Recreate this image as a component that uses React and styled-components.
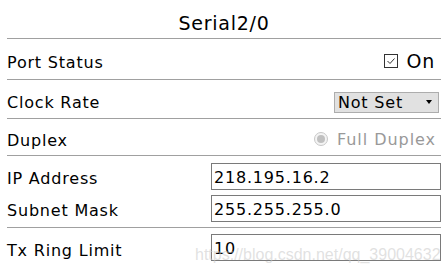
import React from "react";
import styled, { createGlobalStyle } from "styled-components";

const Global = createGlobalStyle`
  html, body { margin: 0; padding: 0; background: #fff; }
  body { font-family: "DejaVu Sans", Verdana, sans-serif; color: #000; }
`;

const Page = styled.div`
  position: relative;
  width: 448px;
  height: 273px;
  padding: 0 7px;
  box-sizing: border-box;
  overflow: hidden;
`;

const Title = styled.div`
  height: 39px;
  border-bottom: 1px solid #a0a0a0;
  display: flex;
  align-items: center;
  justify-content: center;
  font-size: 19px;
  letter-spacing: 0.75px;
  padding-top: 8px;
  box-sizing: border-box;
`;

const Row = styled.div`
  height: ${(p) => p.$h}px;
  display: flex;
  align-items: center;
  justify-content: space-between;
  border-bottom: 1px solid #a0a0a0;
  padding-top: 4px;
  box-sizing: border-box;
`;

const Group = styled.div`
  border-bottom: 1px solid #a0a0a0;
  padding: 7px 0 5px;
  display: flex;
  flex-direction: column;
  gap: 5px;
`;

const FieldRow = styled.div`
  height: 27px;
  display: flex;
  align-items: center;
  justify-content: space-between;
`;

const Label = styled.span`
  font-size: 16px;
  letter-spacing: 0.8px;
  color: #000;
  padding-top: 3px;
`;

const Check = styled.label`
  display: flex;
  align-items: center;
  gap: 8px;
  margin-right: 6px;
  font-size: 19px;
  letter-spacing: 0.8px;
`;

const Box = styled.span`
  width: 14px;
  height: 14px;
  border: 1px solid #333;
  box-sizing: border-box;
  display: flex;
  align-items: center;
  justify-content: center;
  background: #fff;
`;

const Select = styled.div`
  width: 105px;
  height: 21px;
  box-sizing: border-box;
  border: 1px solid #adadad;
  background: #e1e1e1;
  display: flex;
  align-items: center;
  justify-content: space-between;
  padding: 0 6px 0 3px;
  margin-right: 2px;
  margin-top: 2px;
  font-size: 16px;
  letter-spacing: 0.8px;
`;

const Arrow = styled.span`
  width: 0;
  height: 0;
  border-left: 3.5px solid transparent;
  border-right: 3.5px solid transparent;
  border-top: 4px solid #000;
`;

const Radio = styled.label`
  display: flex;
  align-items: center;
  gap: 9px;
  margin-right: 5px;
  font-size: 16px;
  letter-spacing: 0.95px;
  color: #999;
`;

const RadioDot = styled.span`
  width: 14px;
  height: 14px;
  border-radius: 50%;
  border: 1px solid #c8c8c8;
  box-sizing: border-box;
  display: flex;
  align-items: center;
  justify-content: center;
  background: #f4f4f4;
  &::after {
    content: "";
    width: 8px;
    height: 8px;
    border-radius: 50%;
    background: #c0c0c0;
  }
`;

const Input = styled.div`
  width: 230px;
  height: 27px;
  box-sizing: border-box;
  border: 1px solid #7a7a7a;
  display: flex;
  align-items: center;
  padding-left: 2px;
  padding-top: 2px;
  font-size: 16px;
  letter-spacing: 0.8px;
`;

const TxRow = styled.div`
  height: 39px;
  display: flex;
  align-items: flex-start;
  justify-content: space-between;
  padding-top: 6px;
  box-sizing: border-box;
`;

const TxLabel = styled(Label)`
  margin-top: 4px;
`;

const Watermark = styled.div`
  position: absolute;
  left: 195px;
  top: 246px;
  font-family: "Liberation Sans", Arial, sans-serif;
  font-size: 16px;
  color: rgba(200, 200, 200, 0.55);
  white-space: nowrap;
  pointer-events: none;
`;

export default function App() {
  return (
    <>
      <Global />
      <Page>
        <Title>Serial2/0</Title>
        <Row $h={41}>
          <Label>Port Status</Label>
          <Check>
            <Box>
              <svg width="10" height="10" viewBox="0 0 10 10">
                <path d="M1.5 5 L4 7.5 L8.5 2.5" stroke="#333" strokeWidth="1" fill="none" />
              </svg>
            </Box>
            On
          </Check>
        </Row>
        <Row $h={39}>
          <Label>Clock Rate</Label>
          <Select>
            Not Set
            <Arrow />
          </Select>
        </Row>
        <Row $h={37}>
          <Label>Duplex</Label>
          <Radio>
            <RadioDot />
            Full Duplex
          </Radio>
        </Row>
        <Group>
          <FieldRow>
            <Label>IP Address</Label>
            <Input>218.195.16.2</Input>
          </FieldRow>
          <FieldRow>
            <Label>Subnet Mask</Label>
            <Input>255.255.255.0</Input>
          </FieldRow>
        </Group>
        <TxRow>
          <TxLabel>Tx Ring Limit</TxLabel>
          <Input>10</Input>
        </TxRow>
        <Watermark>https://blog.csdn.net/qq_39004632</Watermark>
      </Page>
    </>
  );
}
